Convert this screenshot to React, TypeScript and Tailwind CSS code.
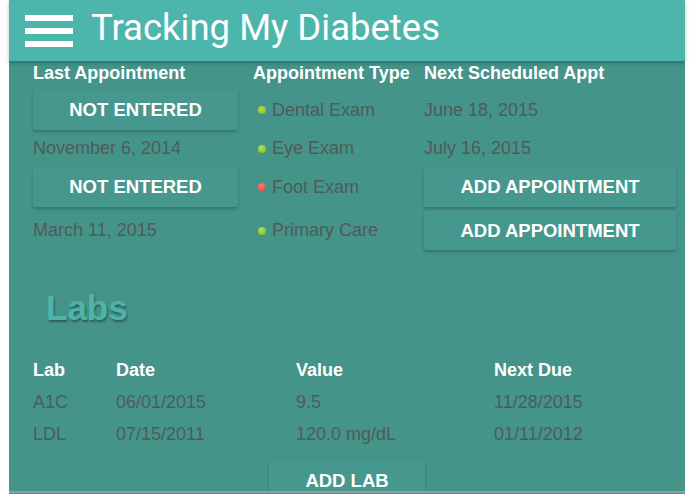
import React from "react";

const data = "font-['Liberation_Sans',Arial,sans-serif]";

function Btn({ label, w }: { label: string; w: string }) {
  return (
    <div
      className={`${w} h-[39px] flex items-center justify-center bg-[#46978d] text-white font-bold text-[18.5px] shadow-[0_2px_3px_rgba(0,0,0,0.22)] rounded-[2px]`}
    >
      {label}
    </div>
  );
}

function Dot({ red }: { red?: boolean }) {
  return (
    <span
      className={`inline-block w-[8px] h-[8px] rounded-full mr-[6px] ${
        red
          ? "bg-[radial-gradient(circle_at_40%_35%,#ff7a6e_0%,#ee5246_70%,#d9443a_100%)]"
          : "bg-[radial-gradient(circle_at_40%_35%,#b5e04a_0%,#8cc42a_70%,#74a81c_100%)]"
      }`}
    />
  );
}

export default function App() {
  const rows = [
    { left: <Btn label="NOT ENTERED" w="w-[205px]" />, type: "Dental Exam", red: false, right: <span>June 18, 2015</span>, h: "h-[44px]" },
    { left: <span>November 6, 2014</span>, type: "Eye Exam", red: false, right: <span>July 16, 2015</span>, h: "h-[33px]" },
    { left: <Btn label="NOT ENTERED" w="w-[205px]" />, type: "Foot Exam", red: true, right: <Btn label="ADD APPOINTMENT" w="w-[252px]" />, h: "h-[44px]" },
    { left: <span>March 11, 2015</span>, type: "Primary Care", red: false, right: <Btn label="ADD APPOINTMENT" w="w-[252px]" />, h: "h-[43px]" },
  ];
  const labs = [
    ["A1C", "06/01/2015", "9.5", "11/28/2015"],
    ["LDL", "07/15/2011", "120.0 mg/dL", "01/11/2012"],
  ];
  return (
    <div className="w-[695px] h-[494px] bg-white overflow-hidden">
      <div className="ml-[9px] w-[676px] h-[494px] bg-[#44948a] flex flex-col relative">
        <div className="h-[61px] bg-[#4db6ac] flex items-center shadow-[0_2px_4px_rgba(0,0,0,0.25)] z-10 shrink-0">
          <div className="ml-[16px] w-[48px] flex flex-col gap-[7px]">
            <div className="h-[6px] bg-white" />
            <div className="h-[6px] bg-white" />
            <div className="h-[6px] bg-white" />
          </div>
          <div className="ml-[18px] text-white text-[36.5px] font-['Roboto',sans-serif] leading-none mt-[-4px]">
            Tracking My Diabetes
          </div>
        </div>

        <div className={`pl-[24px] ${data}`}>
          <div className="h-[25px] flex items-center text-white font-bold text-[18px]">
            <div className="w-[220px]">Last Appointment</div>
            <div className="w-[171px]">Appointment Type</div>
            <div>Next Scheduled Appt</div>
          </div>
          <div className="h-[2px]" />
          {rows.map((r, i) => (
            <div key={i} className={`${r.h} flex items-center text-[18px] text-[#505b59]`}>
              <div className="w-[220px] flex items-center">{r.left}</div>
              <div className="w-[171px] flex items-center pl-[5px]">
                <Dot red={r.red} />
                <span>{r.type}</span>
              </div>
              <div className="flex items-center">{r.right}</div>
            </div>
          ))}
        </div>

        <div
          className={`${data} mt-[36px] ml-[37px] h-[40px] flex items-center text-[35px] font-bold text-[#50b3a9] [text-shadow:1px_2px_2px_rgba(0,0,0,0.35)]`}
        >
          Labs
        </div>

        <div className={`${data} pl-[24px] mt-[26px] text-[18px]`}>
          <div className="h-[32px] flex items-center text-white font-bold">
            <div className="w-[83px]">Lab</div>
            <div className="w-[180px]">Date</div>
            <div className="w-[198px]">Value</div>
            <div>Next Due</div>
          </div>
          {labs.map((l, i) => (
            <div key={i} className="h-[32px] flex items-center text-[#505b59]">
              <div className="w-[83px]">{l[0]}</div>
              <div className="w-[180px]">{l[1]}</div>
              <div className="w-[198px]">{l[2]}</div>
              <div>{l[3]}</div>
            </div>
          ))}
          <div className="mt-[11px] ml-[236px]">
            <Btn label="ADD LAB" w="w-[156px]" />
          </div>
        </div>
        <div className="absolute left-0 right-0 top-[491px] h-[2px] bg-[#8a9fae]" />
      </div>
    </div>
  );
}
